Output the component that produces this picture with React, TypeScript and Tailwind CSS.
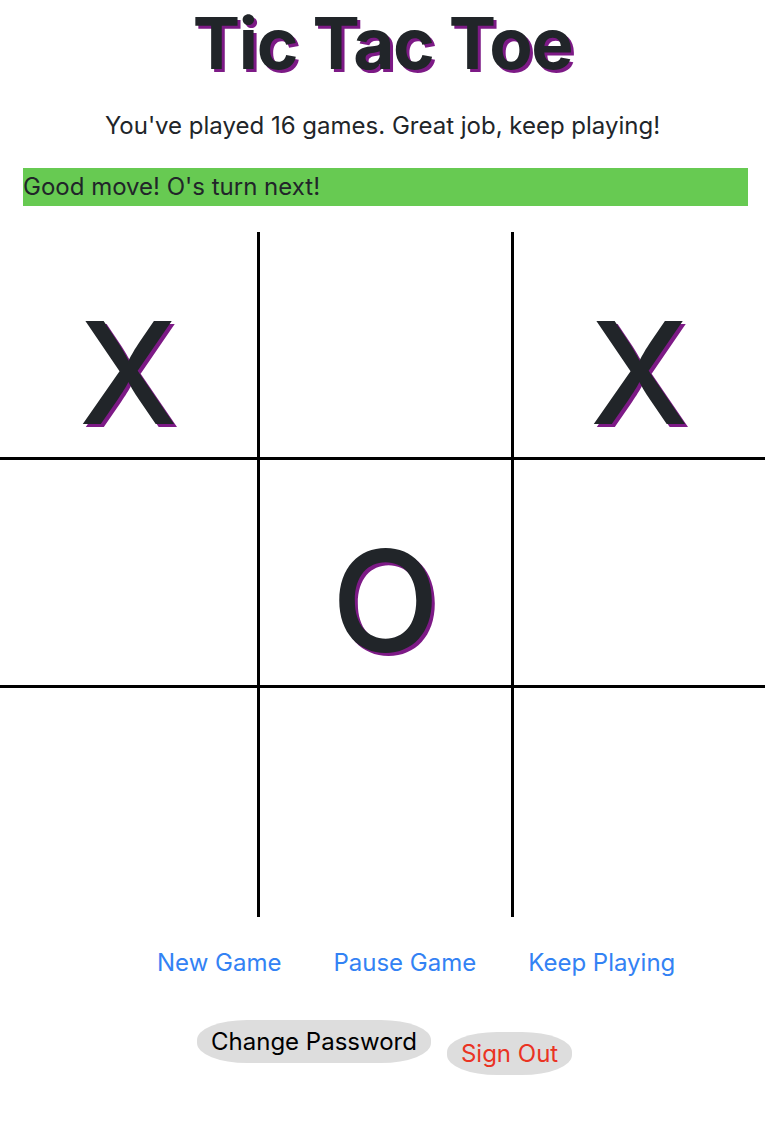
const board: string[] = ['X', '', 'X', '', 'O', '', '', '', ''];

const font = { fontFamily: 'Inter, "Noto Sans", sans-serif' };

export default function App() {
  return (
    <div className="min-h-[1138px] bg-white text-[#212529]" style={font}>
      <h1 className="pt-[8px] text-center text-[71px] font-bold leading-none tracking-[-0.02em] [text-shadow:3px_3px_0_#7d1a86]">
        Tic Tac Toe
      </h1>
      <p className="mt-[29px] text-center text-[24px] leading-[36px]">
        You've played 16 games. Great job, keep playing!
      </p>

      <div className="ml-[23px] mr-[17px] mt-[24px] h-[38px] bg-[#67ca52] text-[24px] leading-[38px]">
        Good move! O's turn next!
      </div>

      {/* Board */}
      <div className="mt-[26px] grid grid-cols-[260px_254px_251px] grid-rows-[228px_228px_229px]">
        {board.map((v, i) => {
          const col = i % 3;
          const row = Math.floor(i / 3);
          return (
            <div
              key={i}
              className={`flex items-end justify-center pb-[14px] border-black ${col < 2 ? 'border-r-[3px]' : ''} ${
                row < 2 ? 'border-b-[3px]' : ''
              }`}
            >
              <span className="text-[141px] font-[550] leading-none [text-shadow:3px_3px_0_#7d1a86]">{v}</span>
            </div>
          );
        })}
      </div>

      {/* Game controls */}
      <div className="mt-[30px] flex pl-[157px] gap-[52px] text-[24px] leading-[32px] text-[#3382f4]">
        <a href="#">New Game</a>
        <a href="#">Pause Game</a>
        <a href="#">Keep Playing</a>
      </div>

      <div className="mt-[41px] flex items-start pl-[197px] gap-[16px] text-[24px]">
        <button className="h-[43px] px-[14px] rounded-[50px/20px] bg-[#dddddd] text-black">Change Password</button>
        <button className="mt-[12px] h-[43px] px-[14px] rounded-[50px/20px] bg-[#dddddd] text-[#ea3323]">Sign Out</button>
      </div>
    </div>
  );
}
